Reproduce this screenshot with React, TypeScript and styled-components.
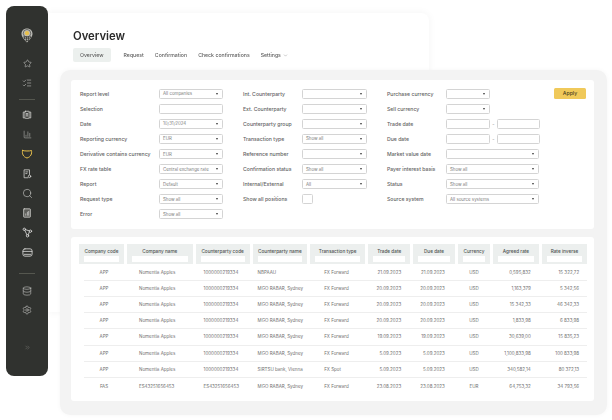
import React from "react"
import styled, { createGlobalStyle } from "styled-components"
import { Star, ListChecks, BarChart3, Search, Database, Settings, ChevronsRight, ChevronDown } from "lucide-react"

const GlobalStyle = createGlobalStyle`
  html, body {
    margin: 0;
    padding: 0;
    background: #fff;
    font-family: Inter, "Liberation Sans", sans-serif;
  }
  * { box-sizing: border-box; }
`

const Stage = styled.div`
  width: 612px;
  height: 420px;
  overflow: hidden;
  display: flex;
  align-items: flex-start;
  padding: 6px 0 0 6px;
  filter: blur(0.3px);
`

const Sidebar = styled.nav`
  position: relative;
  z-index: 2;
  flex: none;
  width: 42px;
  height: 370px;
  background: #30322f;
  border-radius: 8px;
  display: flex;
  flex-direction: column;
  align-items: center;
  padding-top: 22px;
  color: #e2e2e0;
`

const LogoGap = styled.div`
  height: 11px;
`

const Divider = styled.div<{ $above: number; $below: number }>`
  width: 16px;
  height: 1px;
  background: #55574f;
  margin: ${(p) => p.$above}px 0 ${(p) => p.$below}px;
`

const IconSlot = styled.div<{ $active?: boolean }>`
  width: 14px;
  height: 19.6px;
  display: flex;
  align-items: center;
  justify-content: center;
  color: ${(p) => (p.$active ? "#e6bf4c" : "#dcdcda")};
`

const ExpandSlot = styled(IconSlot)`
  margin-top: 18px;
  color: #8c8d88;
`

const Main = styled.div`
  flex: none;
  display: grid;
  width: 564px;
`

const BackCard = styled.section`
  grid-area: 1 / 1;
  margin-top: 7px;
  width: 381px;
  height: 299px;
  background: #fff;
  border-radius: 0 8px 8px 0;
  box-shadow: 0 0 8px rgba(0, 0, 0, 0.05);
  padding: 15px 0 0 25px;
`

const Title = styled.h1`
  margin: 0;
  font-size: 11.3px;
  font-weight: 600;
  line-height: 16px;
  color: #2b2b2b;
`

const Tabs = styled.div`
  display: flex;
  align-items: center;
  margin-top: 4px;
  gap: 11px;
`

const Tab = styled.div<{ $active?: boolean }>`
  display: flex;
  align-items: center;
  gap: 2px;
  height: 14px;
  padding: 0 ${(p) => (p.$active ? "7px" : "0")};
  margin-right: ${(p) => (p.$active ? "2px" : "0")};
  border-radius: 2px;
  background: ${(p) => (p.$active ? "#ecf0ee" : "transparent")};
  font-size: 5.2px;
  font-weight: 500;
  color: #5e5e5e;
`

const Panel = styled.section`
  grid-area: 1 / 1;
  margin: 64px 0 0 12px;
  width: 547px;
  height: 345px;
  background: #f3f3f3;
  border-radius: 10px;
  box-shadow: 0 0 5px rgba(0, 0, 0, 0.04);
  padding: 10px 13px 0 11px;
  display: flex;
  flex-direction: column;
  gap: 8px;
`

const FilterCard = styled.div`
  height: 149px;
  background: #fff;
  border-radius: 3px;
  display: flex;
  padding: 6.3px 8px 0 9px;
`

const FilterColumn = styled.div<{ $width: number }>`
  flex: none;
  width: ${(p) => p.$width}px;
  display: grid;
  grid-auto-rows: 15.05px;
  align-content: start;
`

const FormRow = styled.div`
  display: flex;
  align-items: center;
  height: 15.05px;
`

const Label = styled.label<{ $width: number }>`
  flex: none;
  width: ${(p) => p.$width}px;
  font-size: 5.15px;
  font-weight: 500;
  color: #636363;
  white-space: nowrap;
`

const Field = styled.div<{ $width: number }>`
  flex: none;
  width: ${(p) => p.$width}px;
  height: 10px;
  border: 1px solid #d4d4d4;
  border-radius: 1.5px;
  background: #fff;
  display: flex;
  align-items: center;
  justify-content: space-between;
  padding: 0 4px 0 3px;
  font-size: 4.4px;
  color: #7d7d7d;
  white-space: nowrap;
`

const Caret = styled.span`
  width: 0;
  height: 0;
  border-left: 1.3px solid transparent;
  border-right: 1.3px solid transparent;
  border-top: 2px solid #3b3b3b;
`

const Dash = styled.span`
  width: 6.6px;
  text-align: center;
  font-size: 5px;
  color: #8d8d8d;
`

const Checkbox = styled.div`
  width: 10.5px;
  height: 10.5px;
  border: 1px solid #d4d4d4;
  border-radius: 1.5px;
`

const ApplyCell = styled.div`
  flex: 1;
  display: flex;
  justify-content: flex-end;
  padding-top: 1.7px;
`

const ApplyButton = styled.button`
  width: 32px;
  height: 11px;
  border: none;
  border-radius: 1.5px;
  background: #f0c95a;
  color: #4a4020;
  font-family: inherit;
  font-size: 5.2px;
  font-weight: 500;
  padding: 0;
`

const TableCard = styled.div`
  height: 164px;
  background: #fff;
  border-radius: 3px;
  padding: 7px 7px 0 8px;
`

const HeaderRow = styled.div`
  display: grid;
  grid-template-columns: 45px 65.6px 54px 54.6px 55px 42px 41.6px 32.4px 45.6px 45.4px;
  column-gap: 3px;
  margin-bottom: 0.6px;
`

const HeaderCell = styled.div`
  height: 20px;
  background: #ecefee;
  display: flex;
  flex-direction: column;
  align-items: stretch;
  padding: 3.5px 5px 0;
  font-size: 4.7px;
  font-weight: 500;
  color: #4d5250;
  text-align: center;
  white-space: nowrap;
`

const HeaderInput = styled.div`
  height: 6px;
  margin-top: 2px;
  background: #fff;
`

const BodyRow = styled.div`
  display: grid;
  grid-template-columns: 40px 65.6px 54px 54.6px 55px 42px 41.6px 32.4px 45.6px 45.4px;
  column-gap: 3px;
  margin-left: 5px;
  height: 16.2px;
  align-items: center;
  border-bottom: 1px solid #eeeeee;
  &:last-child { border-bottom: none; }
`

const BodyCell = styled.div<{ $align: string; $inset: number }>`
  font-size: 4.5px;
  color: #707070;
  white-space: nowrap;
  text-align: ${(p) => p.$align};
  ${(p) =>
    p.$align === "right"
      ? `padding-right: ${p.$inset}px;`
      : p.$align === "left"
        ? `padding-left: ${p.$inset}px;`
        : ""}
`

type FieldSpec =
  | { kind: "select"; text?: string; width: number }
  | { kind: "input"; width: number }
  | { kind: "range" }
  | { kind: "check" }

const sel = (width: number, text?: string): FieldSpec => ({ kind: "select", text, width })

const col1: [string, FieldSpec][] = [
  ["Report level", sel(64, "All companies")],
  ["Selection", { kind: "input", width: 64 }],
  ["Date", sel(64, "10/31/2024")],
  ["Reporting currency", sel(64, "EUR")],
  ["Derivative contains currency", sel(64, "EUR")],
  ["FX rate table", sel(64, "Central exchange rate")],
  ["Report", sel(64, "Default")],
  ["Request type", sel(64, "Show all")],
  ["Error", sel(64, "Show all")],
]

const col2: [string, FieldSpec][] = [
  ["Int. Counterparty", sel(65)],
  ["Ext. Counterparty", sel(65)],
  ["Counterparty group", sel(65)],
  ["Transaction type", sel(65, "Show all")],
  ["Reference number", sel(65)],
  ["Confirmation status", sel(65, "Show all")],
  ["Internal/External", sel(65, "All")],
  ["Show all positions", { kind: "check" }],
]

const col3: [string, FieldSpec][] = [
  ["Purchase currency", sel(44)],
  ["Sell currency", sel(44)],
  ["Trade date", { kind: "range" }],
  ["Due date", { kind: "range" }],
  ["Market value date", sel(93)],
  ["Payer interest basis", sel(93, "Show all")],
  ["Status", sel(93, "Show all")],
  ["Source system", sel(93, "All source systems")],
]

function FilterField({ spec }: { spec: FieldSpec }) {
  if (spec.kind === "check") return <Checkbox />
  if (spec.kind === "range") {
    return (
      <>
        <Field $width={44} />
        <Dash>-</Dash>
        <Field $width={43} />
      </>
    )
  }
  if (spec.kind === "input") return <Field $width={spec.width} />
  return (
    <Field $width={spec.width}>
      <span>{spec.text}</span>
      <Caret />
    </Field>
  )
}

function Filters({ rows, labelWidth }: { rows: [string, FieldSpec][]; labelWidth: number }) {
  return (
    <>
      {rows.map(([label, spec]) => (
        <FormRow key={label}>
          <Label $width={labelWidth}>{label}</Label>
          <FilterField spec={spec} />
        </FormRow>
      ))}
    </>
  )
}

const headers = [
  "Company code",
  "Company name",
  "Counterparty code",
  "Counterparty name",
  "Transaction type",
  "Trade date",
  "Due date",
  "Currency",
  "Agreed rate",
  "Rate inverse",
]

const aligns: [string, number][] = [
  ["center", 0],
  ["left", 12],
  ["left", 8],
  ["left", 5],
  ["left", 14],
  ["right", 9],
  ["right", 10],
  ["center", 0],
  ["right", 8],
  ["right", 8],
]

const rows = [
  ["APP", "Nomentia Apples", "1000000219334", "NBPAAU", "FX Forward", "21.09.2023", "21.09.2023", "USD", "0,595,832", "15 322,72"],
  ["APP", "Nomentia Apples", "1000000219334", "MGO RABAR, Sydney", "FX Forward", "20.09.2023", "20.09.2023", "USD", "1,163,379", "5 342,56"],
  ["APP", "Nomentia Apples", "1000000219334", "MGO RABAR, Sydney", "FX Forward", "20.09.2023", "20.09.2023", "USD", "15 342,33", "46 342,33"],
  ["APP", "Nomentia Apples", "1000000219334", "MGO RABAR, Sydney", "FX Forward", "20.09.2023", "20.09.2023", "USD", "1,833,98", "6 833,98"],
  ["APP", "Nomentia Apples", "1000000219334", "MGO RABAR, Sydney", "FX Forward", "19.09.2023", "19.09.2023", "USD", "30,639,00", "15 835,23"],
  ["APP", "Nomentia Apples", "1000000219334", "MGO RABAR, Sydney", "FX Forward", "5.09.2023", "5.09.2023", "USD", "1,100,833,98", "100 833,98"],
  ["APP", "Nomentia Apples", "1000000219334", "SIRTSU bank, Vienna", "FX Spot", "5.09.2023", "5.09.2023", "USD", "340,582,14", "80 372,13"],
  ["FAS", "ES43251656453", "ES43251656453", "MGO RABAR, Sydney", "FX Forward", "23.08.2023", "23.08.2023", "EUR", "64,753,32", "34 793,56"],
]

const Glyph = ({ children, size = 10 }: { children: React.ReactNode; size?: number }) => (
  <svg width={size} height={size} viewBox="0 0 12 12" fill="none" stroke="currentColor" strokeWidth="0.9" strokeLinecap="round" strokeLinejoin="round">
    {children}
  </svg>
)

const LedgerIcon = () => (
  <Glyph>
    <path d="M3 2.500H1.500v7H3M9 2.500h1.500v7H9" />
    <rect x="3.500" y="1.500" width="5" height="8.500" rx="0.600" />
    <path d="M6 4v3.500" strokeWidth="1.400" />
  </Glyph>
)

const ShieldIcon = () => (
  <Glyph size={12}>
    <path d="M1.500 2.500C3 3.200 9 3.200 10.500 2.500c.6 3.200-.6 6.400-4.500 7.500C2.100 8.900.9 5.700 1.500 2.500Z" strokeWidth="1" />
  </Glyph>
)

const ReportIcon = () => (
  <Glyph>
    <path d="M7 10.500H2.500v-9.500h6.500v5.500" />
    <path d="M4.500 3.500h2.500M4.500 5.500h1.500" />
    <circle cx="9" cy="8.800" r="1.500" />
  </Glyph>
)

const ChartDocIcon = () => (
  <Glyph>
    <rect x="2" y="1" width="8" height="10" rx="0.600" fill="#5b5c58" />
    <path d="M4.500 8.800V7M6.500 8.800V5M8 8.800V4" strokeWidth="0.800" />
  </Glyph>
)

const NodesIcon = () => (
  <Glyph size={11}>
    <circle cx="2.500" cy="2.500" r="1.300" />
    <circle cx="9.200" cy="4.600" r="1.300" />
    <circle cx="6" cy="9.600" r="1.300" />
    <path d="M3.800 2.900l4.100 1.300M3.100 3.700l2.200 4.700M8 5.500 6.800 8.400" />
  </Glyph>
)

const VaultIcon = () => (
  <Glyph size={11}>
    <rect x="1" y="2" width="10" height="8" rx="2.200" />
    <path d="M1.200 4.800h9.600M2.500 8h7" />
  </Glyph>
)

function Logo() {
  return (
    <svg width="12" height="15" viewBox="0 0 24 30">
      <path d="M12 1C5.500 1 1 5.500 1 11.500c0 6.500 6 12 11 17.500 5-5.500 11-11 11-17.500C23 5.500 18.500 1 12 1Z" fill="#bcbcb7" />
      <path d="M4 18h16M6 21.500h12M9 25h6" stroke="#30322f" strokeWidth="1.400" />
      <path d="M7 17v5M11 17v10M15 17v10M19 17v3" stroke="#30322f" strokeWidth="1.400" />
      <circle cx="12" cy="10.500" r="7.500" fill="none" stroke="#30322f" strokeWidth="1.200" />
      <circle cx="12" cy="10.500" r="4.300" fill="#e6bf4c" />
    </svg>
  )
}

export default function App() {
  return (
    <Stage>
      <GlobalStyle />
      <Sidebar>
        <Logo />
        <LogoGap />
        <IconSlot><Star size={9} strokeWidth={1.3} /></IconSlot>
        <IconSlot><ListChecks size={10} strokeWidth={1.2} /></IconSlot>
        <Divider $above={6} $below={5} />
        <IconSlot><LedgerIcon /></IconSlot>
        <IconSlot><BarChart3 size={9} strokeWidth={1.2} /></IconSlot>
        <IconSlot $active><ShieldIcon /></IconSlot>
        <IconSlot><ReportIcon /></IconSlot>
        <IconSlot><Search size={11} strokeWidth={1.2} /></IconSlot>
        <IconSlot><ChartDocIcon /></IconSlot>
        <IconSlot><NodesIcon /></IconSlot>
        <IconSlot><VaultIcon /></IconSlot>
        <Divider $above={11} $below={7} />
        <IconSlot><Database size={10} strokeWidth={1.2} /></IconSlot>
        <IconSlot><Settings size={10} strokeWidth={1.2} /></IconSlot>
        <ExpandSlot><ChevronsRight size={7} strokeWidth={1.4} /></ExpandSlot>
      </Sidebar>
      <Main>
        <BackCard>
          <Title>Overview</Title>
          <Tabs>
            <Tab $active>Overview</Tab>
            <Tab>Request</Tab>
            <Tab>Confirmation</Tab>
            <Tab>Check confirmations</Tab>
            <Tab>
              Settings <ChevronDown size={5} strokeWidth={1.5} />
            </Tab>
          </Tabs>
        </BackCard>
        <Panel>
          <FilterCard>
            <FilterColumn $width={163}>
              <Filters rows={col1} labelWidth={79} />
            </FilterColumn>
            <FilterColumn $width={144}>
              <Filters rows={col2} labelWidth={59} />
            </FilterColumn>
            <FilterColumn $width={152}>
              <Filters rows={col3} labelWidth={59} />
            </FilterColumn>
            <ApplyCell>
              <ApplyButton>Apply</ApplyButton>
            </ApplyCell>
          </FilterCard>
          <TableCard>
            <HeaderRow>
              {headers.map((h) => (
                <HeaderCell key={h}>
                  {h}
                  <HeaderInput />
                </HeaderCell>
              ))}
            </HeaderRow>
            {rows.map((row, i) => (
              <BodyRow key={i}>
                {row.map((cell, j) => (
                  <BodyCell key={j} $align={aligns[j][0]} $inset={aligns[j][1]}>
                    {cell}
                  </BodyCell>
                ))}
              </BodyRow>
            ))}
          </TableCard>
        </Panel>
      </Main>
    </Stage>
  )
}
